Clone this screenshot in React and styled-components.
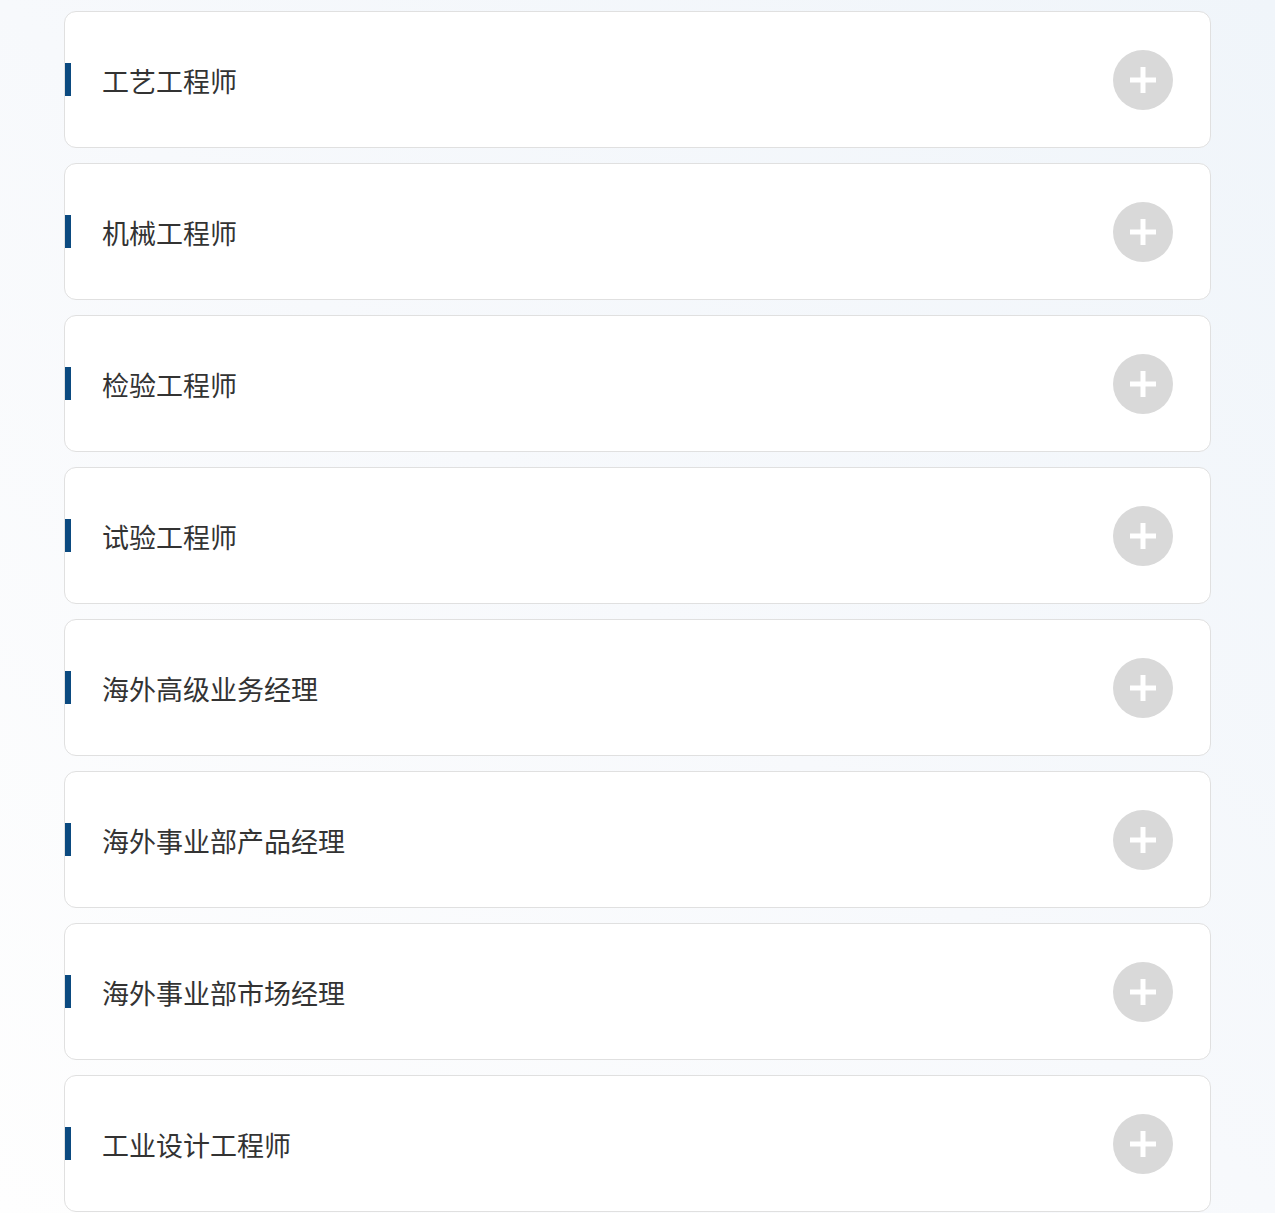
import React from 'react'
import styled, { createGlobalStyle } from 'styled-components'

const GlobalStyle = createGlobalStyle`
  html, body {
    margin: 0;
    padding: 0;
  }
  body {
    min-height: 1213px;
    background: linear-gradient(to bottom left, #f0f5fa 0%, #f7f9fc 50%, #fefefe 100%);
    font-family: "Noto Sans CJK SC", "Noto Sans", sans-serif;
  }
`

const JobList = styled.div`
  display: flex;
  flex-direction: column;
  gap: 15px;
  margin: 0 64px;
  padding-top: 11px;
`

const JobCard = styled.div`
  display: flex;
  align-items: center;
  height: 137px;
  box-sizing: border-box;
  background: #fff;
  border: 1px solid #e0e0e0;
  border-radius: 12px;
  padding-right: 37px;
  cursor: pointer;
`

const Marker = styled.span`
  flex: none;
  width: 6px;
  height: 33px;
  background: #0b4a80;
`

const Title = styled.h3`
  flex: 1;
  margin: 1px 0 0 31px;
  font-size: 27px;
  font-weight: 400;
  color: #333;
`

const PlusButton = styled.span`
  position: relative;
  flex: none;
  width: 60px;
  height: 60px;
  border-radius: 50%;
  background: #d9d9d9;

  &::before,
  &::after {
    content: '';
    position: absolute;
    left: 50%;
    top: 50%;
    background: #fff;
    transform: translate(-50%, -50%);
  }
  &::before {
    width: 26px;
    height: 5px;
  }
  &::after {
    width: 5px;
    height: 26px;
  }
`

const jobs = [
  '工艺工程师',
  '机械工程师',
  '检验工程师',
  '试验工程师',
  '海外高级业务经理',
  '海外事业部产品经理',
  '海外事业部市场经理',
  '工业设计工程师',
]

export default function App() {
  return (
    <>
      <GlobalStyle />
      <JobList>
        {jobs.map(job => (
          <JobCard key={job}>
            <Marker />
            <Title>{job}</Title>
            <PlusButton />
          </JobCard>
        ))}
      </JobList>
    </>
  )
}
